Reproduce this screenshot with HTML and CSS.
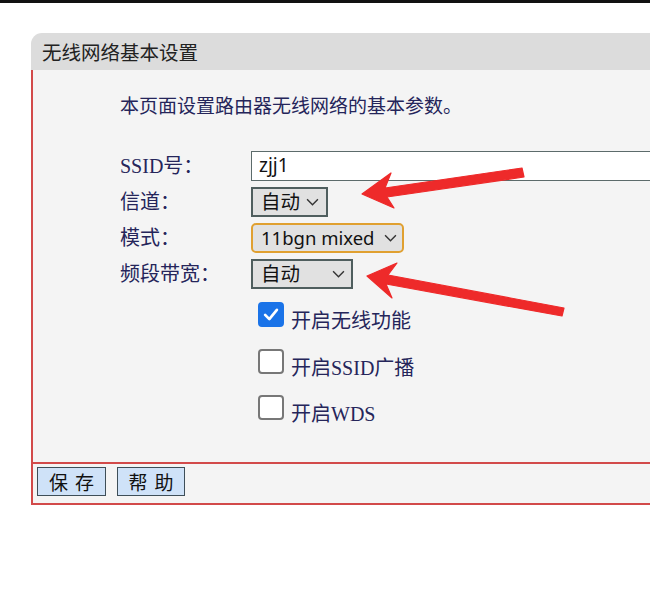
FILE: index.html
```html
<!DOCTYPE html>
<html lang="zh">
<head>
<meta charset="utf-8">
<title>无线网络基本设置</title>
<link rel="stylesheet" href="styles.css">
</head>
<body>
<div class="topbar"></div>
<div class="wrap">
  <div class="panel">
    <div class="header">无线网络基本设置</div>
    <div class="content">
      <p class="desc">本页面设置路由器无线网络的基本参数。</p>
      <div class="form">
        <div class="label">SSID号：</div>
        <div class="field"><div class="input">zjj1</div></div>
        <div class="label">信道：</div>
        <div class="field"><div class="select s1"><span>自动</span><svg class="chev" viewBox="0 0 12 7"><path d="M1 1 L6 6 L11 1"/></svg></div></div>
        <div class="label">模式：</div>
        <div class="field"><div class="select s2"><span class="latin">11bgn mixed</span><svg class="chev" viewBox="0 0 12 7"><path d="M1 1 L6 6 L11 1"/></svg></div></div>
        <div class="label">频段带宽：</div>
        <div class="field"><div class="select s3"><span>自动</span><svg class="chev" viewBox="0 0 12 7"><path d="M1 1 L6 6 L11 1"/></svg></div></div>
      </div>
      <div class="checks">
        <div class="check"><span class="cbox on"><svg viewBox="0 0 26 25"><path d="M6 13 L11 18 L20 7"/></svg></span><span class="ctext">开启无线功能</span></div>
        <div class="check"><span class="cbox"></span><span class="ctext">开启SSID广播</span></div>
        <div class="check"><span class="cbox"></span><span class="ctext">开启WDS</span></div>
      </div>
    </div>
    <div class="footer">
      <div class="btn b1">保存</div>
      <div class="btn b2">帮助</div>
    </div>
  </div>
</div>
<svg class="arrows" width="650" height="597" viewBox="0 0 650 597">
  <polygon points="362,194 391,173 385,188 522,168 524,177 387,197 394,208"/>
  <polygon points="367,276 397,263 388,275 564,308 562,316 386,284 392,298"/>
</svg>
</body>
</html>
```
FILE: styles.css
```css
html, body {
  margin: 0;
  padding: 0;
  background: #ffffff;
  overflow: hidden;
}
body {
  width: 650px;
  height: 597px;
  position: relative;
  font-family: "Liberation Serif", "Noto Sans CJK SC", serif;
}
.topbar {
  height: 3px;
  background: #111;
}
.wrap {
  padding: 30px 0 0 31px;
}
.panel {
  width: 619px;
  overflow: hidden;
}
.header {
  height: 37px;
  line-height: 37px;
  background: #dcdcdc;
  border-radius: 11px 0 0 0;
  padding-left: 11px;
  font-family: "Noto Sans CJK SC", sans-serif;
  font-size: 19.5px;
  color: #222;
}
.content {
  box-sizing: border-box;
  height: 394px;
  background: #f4f4f4;
  border-left: 2px solid #d24a4a;
  border-bottom: 2px solid #d24a4a;
  padding: 22px 0 0 87px;
}
.desc {
  margin: 0;
  height: 26px;
  line-height: 26px;
  font-family: "Noto Sans CJK SC", sans-serif;
  font-size: 19px;
  color: #25255a;
}
.form {
  margin-top: 33px;
  display: grid;
  grid-template-columns: 131px 1fr;
  row-gap: 6px;
}
.label {
  height: 30px;
  line-height: 30px;
  font-size: 20px;
  color: #25255a;
}
.field {
  display: flex;
  align-items: center;
}
.input {
  flex: 1;
  height: 30px;
  box-sizing: border-box;
  border: 1.5px solid #5c6b6b;
  border-right: none;
  background: #fff;
  padding-left: 7px;
  font-family: "Noto Sans", "Noto Sans CJK SC", sans-serif;
  font-size: 19px;
  line-height: 27px;
  color: #111;
}
.select {
  height: 30px;
  box-sizing: border-box;
  display: flex;
  align-items: center;
  justify-content: space-between;
  background: #e1e1e1;
  border: 2px solid #4f5e5e;
  padding: 0 7px 0 8px;
  font-family: "Noto Sans", "Noto Sans CJK SC", sans-serif;
  font-size: 19.5px;
  color: #111;
}
.select span {
  line-height: 26px;
}
.select .latin {
  font-size: 18.5px;
}
.s1 { width: 77px; }
.s2 {
  width: 153px;
  border-color: #e0a030;
  border-radius: 5px;
  padding-right: 5px;
}
.s3 { width: 102px; padding-right: 6px; }
.chev {
  width: 13px;
  height: 8px;
  fill: none;
  stroke: #333;
  stroke-width: 1.3;
}
.checks {
  margin-top: 13px;
  padding-left: 138px;
  display: flex;
  flex-direction: column;
  gap: 20.5px;
}
.check {
  display: flex;
  align-items: flex-start;
  height: 26px;
}
.cbox {
  width: 26px;
  height: 25px;
  box-sizing: border-box;
  border: 2px solid #777;
  border-radius: 4px;
  background: #fff;
  display: block;
  flex: none;
}
.cbox.on {
  background: #1a73e8;
  border-color: #1a73e8;
}
.cbox svg {
  width: 22px;
  height: 21px;
  display: block;
  fill: none;
  stroke: #fff;
  stroke-width: 3.2;
  stroke-linecap: round;
  stroke-linejoin: round;
}
.ctext {
  margin-left: 7px;
  margin-top: 6px;
  line-height: 26px;
  font-size: 20px;
  color: #25255a;
  white-space: nowrap;
}
.footer {
  height: 41px;
  box-sizing: border-box;
  border-left: 2px solid #d24a4a;
  border-bottom: 2px solid #d24a4a;
  background: #f4f4f4;
  display: flex;
  align-items: flex-start;
  gap: 11px;
  padding: 3px 0 0 4px;
}
.btn {
  height: 29px;
  box-sizing: border-box;
  background: #cfe2f8;
  border: 1.5px solid #3e4e58;
  font-family: "Noto Sans CJK SC", sans-serif;
  font-size: 19px;
  line-height: 28px;
  letter-spacing: 7px;
  color: #111;
  text-align: center;
  padding-left: 7px;
}
.b1 { width: 69px; }
.b2 { width: 68px; }
.arrows {
  position: absolute;
  left: 0;
  top: 0;
  fill: #ee2a2a;
  stroke: #ee2a2a;
  stroke-width: 1.2;
  stroke-linejoin: round;
}
```
